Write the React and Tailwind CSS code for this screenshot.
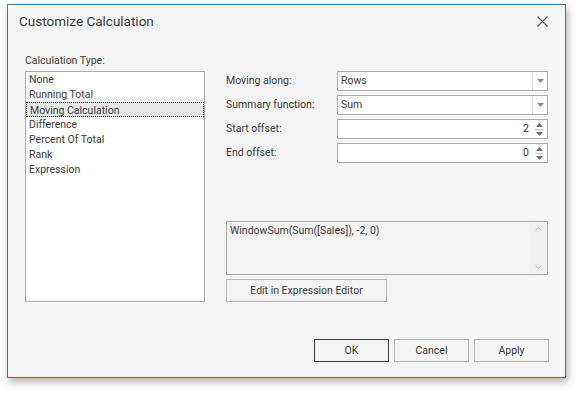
import React from "react";

const items = [
    "None",
    "Running Total",
    "Moving Calculation",
    "Difference",
    "Percent Of Total",
    "Rank",
    "Expression",
];

function Combo({ value }) {
    return (
        <div className="flex h-[20px] w-[211px] border border-[#ababab] bg-white">
            <div className="flex-1 pl-[3px] leading-[18px]">{value}</div>
            <div className="flex w-[15px] items-center justify-center border-l border-[#dcdcdc]">
                <svg width="7" height="4" viewBox="0 0 7 4">
                    <path d="M0 0h7L3.5 4z" fill="#8a8a8a" />
                </svg>
            </div>
        </div>
    );
}

function Spin({ value }) {
    return (
        <div className="flex h-[20px] w-[211px] border border-[#ababab] bg-white">
            <div className="flex-1 pr-[3px] text-right leading-[18px]">{value}</div>
            <div className="flex w-[15px] flex-col items-center justify-center gap-[2px]">
                <svg width="7" height="4" viewBox="0 0 7 4">
                    <path d="M0 4h7L3.5 0z" fill="#6e6e6e" />
                </svg>
                <div className="h-px w-[9px] bg-[#c8c8c8]" />
                <svg width="7" height="4" viewBox="0 0 7 4">
                    <path d="M0 0h7L3.5 4z" fill="#6e6e6e" />
                </svg>
            </div>
        </div>
    );
}

function Btn({ children, primary, w = "w-[75px]" }) {
    return (
        <div
            className={`flex h-[23px] ${w} items-center justify-center border bg-[#f5f5f5] ${
                primary ? "border-[#3c3c3c]" : "border-[#b4b4b4]"
            }`}
        >
            {children}
        </div>
    );
}

export default function App() {
    return (
        <div className="h-[393px] w-[579px] bg-white pl-[7px] pt-[4px] text-[10.5px] text-[#3a3a3a] [font-family:Roboto,'Liberation_Sans',sans-serif]">
            <div className="relative flex h-[374px] w-[559px] flex-col border border-[#2d7fa3] bg-[#f5f5f5] shadow-[2px_4px_8px_rgba(0,0,0,0.3)]">
                {/* Title bar */}
                <div className="flex h-[32px] items-center justify-between pl-[11px] pr-[17px]">
                    <span className="text-[13.5px] text-[#3a3a3a]">Customize Calculation</span>
                    <svg width="11" height="11" viewBox="0 0 11 11">
                        <path d="M0.5 0.5l10 10M10.5 0.5l-10 10" stroke="#555" strokeWidth="1.1" />
                    </svg>
                </div>

                <div className="flex pl-[17px] pt-[18px]">
                    {/* Left column */}
                    <div className="flex w-[180px] flex-col">
                        <div className="h-[16px] leading-[12px]">Calculation Type:</div>
                        <div className="h-[231px] border border-[#ababab] bg-white">
                            {items.map((it) => (
                                <div
                                    key={it}
                                    className={`h-[15px] pt-[1px] pl-[3px] leading-[14px] ${
                                        it === "Moving Calculation"
                                            ? "border border-dotted border-black bg-[#e8e8e8] pt-0 pl-[2px] leading-[14px]"
                                            : ""
                                    }`}
                                >
                                    {it}
                                </div>
                            ))}
                        </div>
                    </div>

                    {/* Right column */}
                    <div className="ml-[21px] flex flex-col pt-[16px]">
                        <div className="flex flex-col gap-[4px]">
                            {[
                                ["Moving along:", <Combo value="Rows" />],
                                ["Summary function:", <Combo value="Sum" />],
                                ["Start offset:", <Spin value="2" />],
                                ["End offset:", <Spin value="0" />],
                            ].map(([label, ctrl]) => (
                                <div key={label} className="flex items-center">
                                    <div className="w-[111px]">{label}</div>
                                    {ctrl}
                                </div>
                            ))}
                        </div>

                        <div className="mt-[58px] flex h-[54px] w-[322px] border border-[#ababab] bg-[#f3f3f3]">
                            <div className="flex-1 pl-[3px] pt-[1px]">WindowSum(Sum([Sales]), -2, 0)</div>
                            <div className="flex w-[17px] flex-col items-center justify-between bg-[#f0f0f0] py-[5px]">
                                <svg width="7" height="4" viewBox="0 0 7 4">
                                    <path d="M0.5 3.5l3-3 3 3" stroke="#c4c4c4" fill="none" />
                                </svg>
                                <svg width="7" height="4" viewBox="0 0 7 4">
                                    <path d="M0.5 0.5l3 3 3-3" stroke="#c4c4c4" fill="none" />
                                </svg>
                            </div>
                        </div>
                        <div className="mt-[4px]">
                            <Btn w="w-[161px]">Edit in Expression Editor</Btn>
                        </div>
                    </div>
                </div>

                {/* Footer buttons */}
                <div className="mt-auto mb-[15px] flex justify-end gap-[5px] pr-[16px]">
                    <Btn primary>OK</Btn>
                    <Btn>Cancel</Btn>
                    <Btn>Apply</Btn>
                </div>
            </div>
        </div>
    );
}
